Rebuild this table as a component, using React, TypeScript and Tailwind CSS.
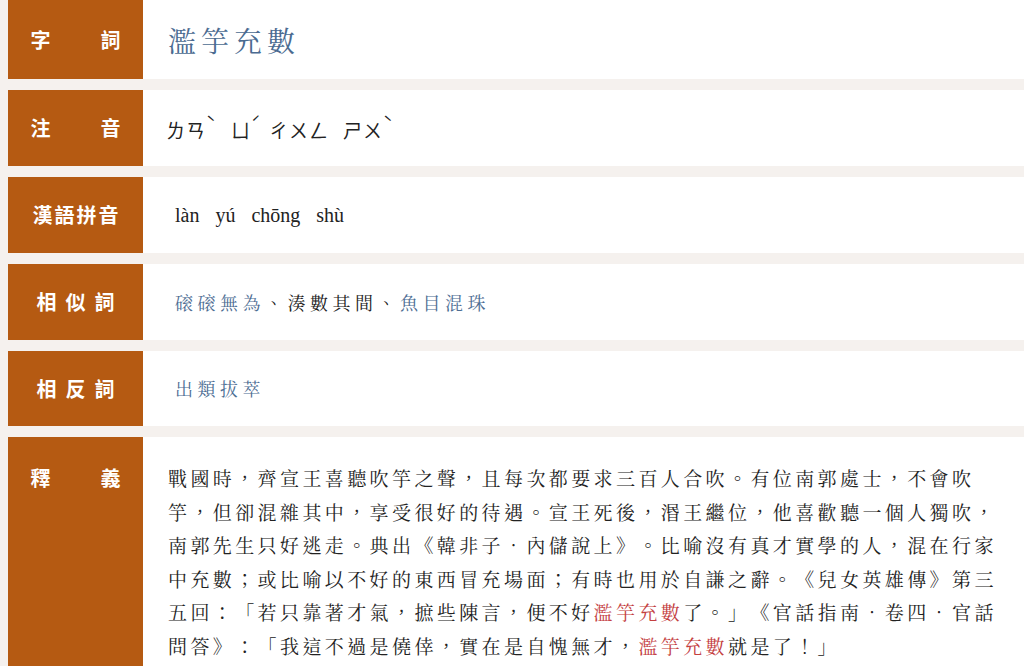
const serif = { fontFamily: '"Noto Serif CJK TC", "Noto Sans CJK TC", serif' }

const Label = ({ chars, width }: { chars: string[]; width: string }) => (
  <div className={`flex justify-between ${width} font-bold text-[20px] leading-[24px] text-white`}>
    {chars.map((c, i) => (
      <span key={i}>{c}</span>
    ))}
  </div>
)

const Row = ({
  height,
  label,
  children,
  top,
}: {
  height: string;
  label: React.ReactNode;
  children: React.ReactNode;
  top?: boolean;
}) => (
  <div className={`flex ${height}`}>
    <div
      className={`w-[135px] shrink-0 bg-[#b55a12] flex justify-center ${top ? 'items-start pt-[29px]' : 'items-center'}`}
    >
      {label}
    </div>
    <div className={`flex-1 bg-white flex ${top ? 'items-start' : 'items-center'}`}>{children}</div>
  </div>
)

// tone mark sits high, just after the last symbol
const Tone = ({ mark }: { mark: string }) => (
  <span className="inline-block w-[8px] text-[16px] leading-[16px] tracking-normal -translate-y-[9px]">{mark}</span>
)

const bodyLines: { text: string; red?: boolean }[][] = [
  [{ text: '戰國時，齊宣王喜聽吹竽之聲，且每次都要求三百人合吹。有位南郭處士，不會吹' }],
  [{ text: '竽，但卻混雜其中，享受很好的待遇。宣王死後，湣王繼位，他喜歡聽一個人獨吹，' }],
  [{ text: '南郭先生只好逃走。典出《韓非子．內儲說上》。比喻沒有真才實學的人，混在行家' }],
  [{ text: '中充數；或比喻以不好的東西冒充場面；有時也用於自謙之辭。《兒女英雄傳》第三' }],
  [
    { text: '五回：「若只靠著才氣，摭些陳言，便不好' },
    { text: '濫竽充數', red: true },
    { text: '了。」《官話指南．卷四．官話' },
  ],
  [
    { text: '問答》：「我這不過是僥倖，實在是自愧無才，' },
    { text: '濫竽充數', red: true },
    { text: '就是了！」' },
  ],
]

export default function App() {
  return (
    <div
      className="w-[1024px] h-[666px] overflow-hidden bg-[#f5f1ee] pl-[8px] flex flex-col gap-[11px] [text-spacing-trim:space-all]"
      style={{ fontFamily: '"Noto Sans CJK TC", "Noto Sans", sans-serif' }}
    >
      <Row height="h-[79px]" label={<Label chars={['字', '詞']} width="w-[90px]" />}>
        <div className="pl-[25px] text-[28px] tracking-[5px] text-[#4b6b91]" style={serif}>
          濫竽充數
        </div>
      </Row>

      <Row height="h-[76px]" label={<Label chars={['注', '音']} width="w-[90px]" />}>
        <div className="pl-[23px] flex items-center text-[19px] tracking-[1px] text-[#222] pt-[4px]">
          <span>
            ㄌㄢ<Tone mark="ˋ" />
          </span>
          <span className="ml-[17px]">
            ㄩ<Tone mark="ˊ" />
          </span>
          <span className="ml-[10px]">ㄔㄨㄥ</span>
          <span className="ml-[14px]">
            ㄕㄨ<Tone mark="ˋ" />
          </span>
        </div>
      </Row>

      <Row height="h-[76px]" label={<Label chars={['漢', '語', '拼', '音']} width="w-[86px]" />}>
        <div
          className="pl-[32px] text-[20px] text-[#222] [word-spacing:11px]"
          style={{ fontFamily: '"Liberation Serif", "Times New Roman", serif' }}
        >
          làn yú chōng shù
        </div>
      </Row>

      <Row height="h-[76px]" label={<Label chars={['相', '似', '詞']} width="w-[78px]" />}>
        <div className="pl-[32px] text-[18px] tracking-[4.5px] text-[#222]" style={serif}>
          <span className="text-[#4d6d93]">磙磙無為</span>、湊數其間、
          <span className="text-[#4d6d93]">魚目混珠</span>
        </div>
      </Row>

      <Row height="h-[75px]" label={<Label chars={['相', '反', '詞']} width="w-[78px]" />}>
        <div className="pl-[32px] text-[18px] tracking-[4.5px] text-[#4d6d93]" style={serif}>
          出類拔萃
        </div>
      </Row>

      <Row height="flex-1" top label={<Label chars={['釋', '義']} width="w-[90px]" />}>
        <div className="pl-[25px] pt-[24px] text-[19px] leading-[33.5px] tracking-[3.4px] text-[#222]" style={serif}>
          {bodyLines.map((line, i) => (
            <div key={i} className="whitespace-nowrap">
              {line.map((seg, j) => (
                <span key={j} className={seg.red ? 'text-[#c4403f]' : undefined}>
                  {seg.text}
                </span>
              ))}
            </div>
          ))}
        </div>
      </Row>
    </div>
  )
}
